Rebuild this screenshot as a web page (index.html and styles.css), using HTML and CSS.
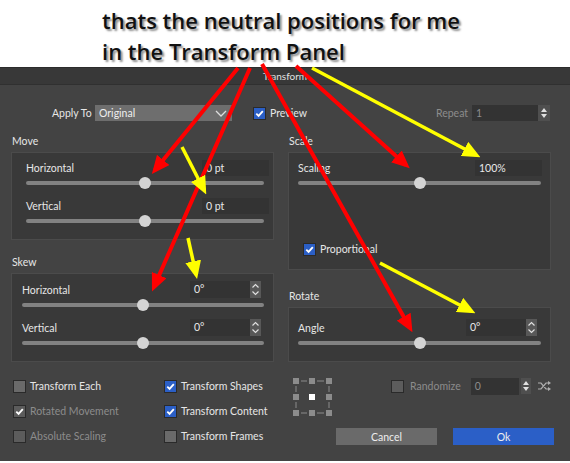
FILE: index.html
```html
<!DOCTYPE html>
<html lang="en">
<head>
    <meta charset="UTF-8">
    <meta name="viewport" content="width=device-width, initial-scale=1.0">
    <title>Transform Panel</title>
    <link rel="stylesheet" href="styles.css">
</head>
<body>
    <div class="caption">
        <p>thats the neutral positions for me</p>
        <p>in the Transform Panel</p>
    </div>

    <div class="dialog">
        <div class="titlebar">Transform</div>

        <div class="apply-row">
            <span class="apply-label">Apply To</span>
            <div class="select">
                <span>Original</span>
                <svg width="12" height="7" viewBox="0 0 12 7"><path d="M1 1 L6 6 L11 1" fill="none" stroke="#ddd" stroke-width="1.3"/></svg>
            </div>
            <label class="check preview"><span class="box on"><svg viewBox="0 0 12 12"><path d="M2.5 6.2 L5 8.7 L9.6 3.4" fill="none" stroke="#fff" stroke-width="2"/></svg></span>Preview</label>
            <span class="repeat-label">Repeat</span>
            <div class="field repeat-field">1</div>
            <div class="arrows">
                <svg width="12" height="16" viewBox="0 0 12 16"><path d="M6 3 L9 7 H3 Z M6 13 L9 9 H3 Z" fill="#e0e0e0"/></svg>
            </div>
        </div>

        <div class="columns">
            <div class="col">
                <div class="section-label">Move</div>
                <div class="panel move">
                    <div class="row"><span>Horizontal</span><div class="field">0 pt</div></div>
                    <div class="slider"><span class="thumb"></span></div>
                    <div class="row gap"><span>Vertical</span><div class="field">0 pt</div></div>
                    <div class="slider"><span class="thumb"></span></div>
                </div>

                <div class="section-label skew-label">Skew</div>
                <div class="panel skew">
                    <div class="row"><span>Horizontal</span><div class="field short">0°</div><div class="stepper"><svg width="11" height="17" viewBox="0 0 11 17"><path d="M2.5 6.5 L5.5 3.5 L8.5 6.5 M2.5 10.5 L5.5 13.5 L8.5 10.5" fill="none" stroke="#e0e0e0" stroke-width="1.2"/></svg></div></div>
                    <div class="slider"><span class="thumb"></span></div>
                    <div class="row gap"><span>Vertical</span><div class="field short">0°</div><div class="stepper"><svg width="11" height="17" viewBox="0 0 11 17"><path d="M2.5 6.5 L5.5 3.5 L8.5 6.5 M2.5 10.5 L5.5 13.5 L8.5 10.5" fill="none" stroke="#e0e0e0" stroke-width="1.2"/></svg></div></div>
                    <div class="slider"><span class="thumb"></span></div>
                </div>
            </div>

            <div class="col">
                <div class="section-label">Scale</div>
                <div class="panel scale">
                    <div class="row"><span>Scaling</span><div class="field">100%</div></div>
                    <div class="slider"><span class="thumb"></span></div>
                    <label class="check proportional"><span class="box on"><svg viewBox="0 0 12 12"><path d="M2.5 6.2 L5 8.7 L9.6 3.4" fill="none" stroke="#fff" stroke-width="2"/></svg></span>Proportional</label>
                </div>

                <div class="section-label rotate-label">Rotate</div>
                <div class="panel rotate">
                    <div class="row"><span>Angle</span><div class="field short">0°</div><div class="stepper"><svg width="11" height="17" viewBox="0 0 11 17"><path d="M2.5 6.5 L5.5 3.5 L8.5 6.5 M2.5 10.5 L5.5 13.5 L8.5 10.5" fill="none" stroke="#e0e0e0" stroke-width="1.2"/></svg></div></div>
                    <div class="slider"><span class="thumb"></span></div>
                </div>
            </div>
        </div>

        <div class="bottom">
            <div class="checks">
                <label class="check"><span class="box"></span>Transform Each</label>
                <label class="check"><span class="box on"><svg viewBox="0 0 12 12"><path d="M2.5 6.2 L5 8.7 L9.6 3.4" fill="none" stroke="#fff" stroke-width="2"/></svg></span>Transform Shapes</label>
                <label class="check dim"><span class="box on"><svg viewBox="0 0 12 12"><path d="M2.5 6.2 L5 8.7 L9.6 3.4" fill="none" stroke="#fff" stroke-width="2"/></svg></span>Rotated Movement</label>
                <label class="check"><span class="box on"><svg viewBox="0 0 12 12"><path d="M2.5 6.2 L5 8.7 L9.6 3.4" fill="none" stroke="#fff" stroke-width="2"/></svg></span>Transform Content</label>
                <label class="check dim"><span class="box"></span>Absolute Scaling</label>
                <label class="check"><span class="box"></span>Transform Frames</label>
            </div>

            <div class="actions">
                <div class="actions-top">
                    <svg class="anchor" width="40" height="40" viewBox="0 0 40 40">
                        <g fill="#8c8c8c">
                            <rect x="0" y="0" width="6" height="6"/><rect x="16" y="0" width="6" height="6"/><rect x="33" y="0" width="6" height="6"/>
                            <rect x="0" y="16" width="6" height="6"/><rect x="33" y="16" width="6" height="6"/>
                            <rect x="0" y="32" width="6" height="6"/><rect x="16" y="32" width="6" height="6"/><rect x="33" y="32" width="6" height="6"/>
                        </g>
                        <rect x="16" y="16" width="6" height="6" fill="#fff"/>
                        <path d="M8 3 H14 M24 3 H31 M8 35 H14 M24 35 H31 M3 8 V14 M3 24 V30 M36 8 V14 M36 24 V30" stroke="#8c8c8c" stroke-width="1"/>
                    </svg>
                    <label class="check dim randomize"><span class="box"></span>Randomize</label>
                    <div class="field rand-field">0</div>
                    <div class="arrows small">
                        <svg width="10" height="16" viewBox="0 0 10 16"><path d="M5 3 L8 7 H2 Z M5 13 L8 9 H2 Z" fill="#e0e0e0"/></svg>
                    </div>
                    <svg class="shuffle" width="14" height="10" viewBox="0 0 14 10">
                        <path d="M0 2 H3 L8 8 H11 M0 8 H3 L8 2 H11" fill="none" stroke="#b0b0b0" stroke-width="1.2"/>
                        <path d="M10 0 L13 2 L10 4 Z M10 6 L13 8 L10 10 Z" fill="#b0b0b0"/>
                    </svg>
                </div>
                <div class="buttons">
                    <button class="btn cancel">Cancel</button>
                    <button class="btn ok">Ok</button>
                </div>
            </div>
        </div>
    </div>

    <!-- hand-drawn annotation arrows on top of the screenshot -->
    <svg class="annotations" width="570" height="463" viewBox="0 0 570 463">
        <defs>
            <marker id="headRed" viewBox="0 0 18 16" refX="13" refY="8" markerWidth="18" markerHeight="16" markerUnits="userSpaceOnUse" orient="auto">
                <path d="M0 0 L18 8 L0 16 Z" fill="#ff0000"/>
            </marker>
            <marker id="headYellow" viewBox="0 0 18 16" refX="13" refY="8" markerWidth="18" markerHeight="16" markerUnits="userSpaceOnUse" orient="auto">
                <path d="M0 0 L18 8 L0 16 Z" fill="#ffff00"/>
            </marker>
        </defs>
        <g stroke="#ff0000" stroke-width="4" marker-end="url(#headRed)">
            <line x1="238" y1="68" x2="155" y2="170"/>
            <line x1="250" y1="68" x2="154" y2="287"/>
            <line x1="262" y1="64" x2="410" y2="328"/>
            <line x1="296" y1="66" x2="406" y2="165"/>
        </g>
        <g stroke="#ffff00" stroke-width="3.5" marker-end="url(#headYellow)">
            <line x1="312" y1="68" x2="476" y2="155"/>
            <line x1="182" y1="147" x2="204" y2="190"/>
            <line x1="188" y1="238" x2="196" y2="274"/>
            <line x1="380" y1="263" x2="471" y2="311"/>
        </g>
    </svg>
</body>
</html>
```

FILE: styles.css
```css
body {
    margin: 0;
    padding: 0;
    background-color: #fff;
    font-family: Lato, "Open Sans", sans-serif;
    position: relative;
    width: 570px;
    height: 463px;
    overflow: hidden;
}

.caption {
    height: 67px;
    box-sizing: border-box;
    padding: 5px 0 0 102px;
    font-family: "Open Sans", sans-serif;
    font-weight: 600;
    font-size: 22px;
    line-height: 31px;
    color: #111;
    text-shadow: 2px 2px 2px rgba(0, 0, 0, 0.45);
}

.caption p {
    margin: 0;
}

.dialog {
    height: 394px;
    box-sizing: border-box;
    background-color: #434343;
    border-top: 1px solid #2c2c2c;
    color: #e6e6e6;
    font-size: 10.5px;
}

.titlebar {
    height: 16px;
    line-height: 16px;
    background-color: #383838;
    border-bottom: 1px solid #303030;
    text-align: center;
    color: #e0e0e0;
    font-size: 10px;
}

/* apply row */
.apply-row {
    display: flex;
    align-items: center;
    height: 16px;
    margin-top: 20px;
    padding-left: 52px;
}

.apply-label {
    width: 43px;
}

.select {
    width: 137px;
    height: 16px;
    box-sizing: border-box;
    background-color: #6e6e6e;
    display: flex;
    align-items: center;
    justify-content: space-between;
    padding: 0 5px 0 4px;
    color: #eee;
}

.check {
    display: flex;
    align-items: center;
    height: 16px;
    color: #e6e6e6;
}

.check .box {
    width: 13px;
    height: 13px;
    box-sizing: border-box;
    border: 1px solid #2a2a2a;
    background-color: #6a6a6a;
    margin-right: 4px;
    display: flex;
    align-items: center;
    justify-content: center;
}

.check .box.on {
    background-color: #2b5fc6;
}

.check .box svg {
    width: 11px;
    height: 11px;
}

.check.dim {
    color: #8c8c8c;
}

.check.dim .box {
    background-color: #5c5c5c;
}

.preview {
    margin-left: 21px;
}

.repeat-label {
    margin-left: 129px;
    color: #8c8c8c;
    width: 36px;
}

.field {
    height: 16px;
    line-height: 16px;
    box-sizing: border-box;
    background-color: #333;
    padding-left: 4px;
    color: #e8e8e8;
    width: 67px;
}

.repeat-field {
    color: #8c8c8c;
    width: 66px;
}

.arrows {
    width: 12px;
    height: 16px;
    background-color: #4f4f4f;
    display: flex;
}

/* columns */
.columns {
    display: flex;
    gap: 14px;
    padding-left: 11px;
    margin-top: 12px;
}

.col {
    width: 263px;
}

.section-label {
    height: 16px;
    line-height: 16px;
    margin-bottom: 3px;
    padding-left: 1px;
}

.skew-label {
    margin-top: 14px;
}

.rotate-label {
    margin-top: 18px;
}

.panel {
    background-color: #393939;
    border: 1px solid #4b4b4b;
    box-sizing: border-box;
}

.row {
    display: flex;
    align-items: center;
    justify-content: space-between;
    height: 16px;
}

.row > span {
    flex: 1;
}

.row.gap {
    margin-top: 8px;
}

.slider {
    position: relative;
    height: 14px;
}

.slider::before {
    content: "";
    position: absolute;
    left: 0;
    right: 0;
    top: 5px;
    height: 4px;
    border-radius: 2px;
    background-color: #828282;
}

.slider .thumb {
    position: absolute;
    top: 1px;
    left: 50%;
    width: 12px;
    height: 12px;
    margin-left: -6px;
    border-radius: 50%;
    background-color: #d4d4d4;
}

.move {
    height: 88px;
    padding: 7px 4px 0 14px;
}

.move .slider {
    margin-right: 5px;
}

.skew {
    height: 89px;
    padding: 7px 0 0 10px;
}

.skew .row {
    height: 17px;
    padding-right: 12px;
}

.skew .row.gap {
    margin-top: 7px;
}

.skew .slider {
    margin-right: 9px;
}

.field.short {
    width: 60px;
    height: 17px;
    line-height: 17px;
}

.stepper {
    width: 11px;
    height: 17px;
    background-color: #585858;
    display: flex;
}

.scale {
    height: 118px;
    padding: 7px 8px 0 9px;
}

.scale .slider {
    margin-right: 1px;
}

.proportional {
    margin: 51px 0 0 5px;
}

.rotate {
    height: 55px;
    padding: 11px 0 0 9px;
}

.rotate .row {
    height: 17px;
    padding-right: 13px;
}

.rotate .slider {
    margin-right: 9px;
}

/* bottom options */
.bottom {
    display: flex;
    margin-top: 16px;
    padding-left: 13px;
}

.checks {
    display: grid;
    grid-template-columns: 151px 129px;
    row-gap: 9px;
    align-content: start;
}

.actions {
    width: 277px;
}

.actions-top {
    display: flex;
    align-items: flex-start;
    height: 40px;
}

.randomize {
    margin-left: 58px;
}

.randomize .box {
    margin-right: 6px;
}

.rand-field {
    margin-left: 10px;
    width: 48px;
    height: 17px;
    color: #8c8c8c;
    background-color: #333;
}

.arrows.small {
    width: 10px;
    margin-left: 2px;
}

.shuffle {
    margin: 3px 0 0 7px;
}

.buttons {
    display: flex;
    gap: 16px;
    margin: 10px 0 0 43px;
}

.btn {
    width: 101px;
    height: 17px;
    border: none;
    padding: 0;
    font-family: Lato, "Open Sans", sans-serif;
    font-size: 10.5px;
    color: #eee;
    border-radius: 0;
}

.cancel {
    background-color: #6a6a6a;
}

.ok {
    background-color: #2b5fc7;
}

.annotations {
    position: absolute;
    top: 0;
    left: 0;
    pointer-events: none;
}
```
